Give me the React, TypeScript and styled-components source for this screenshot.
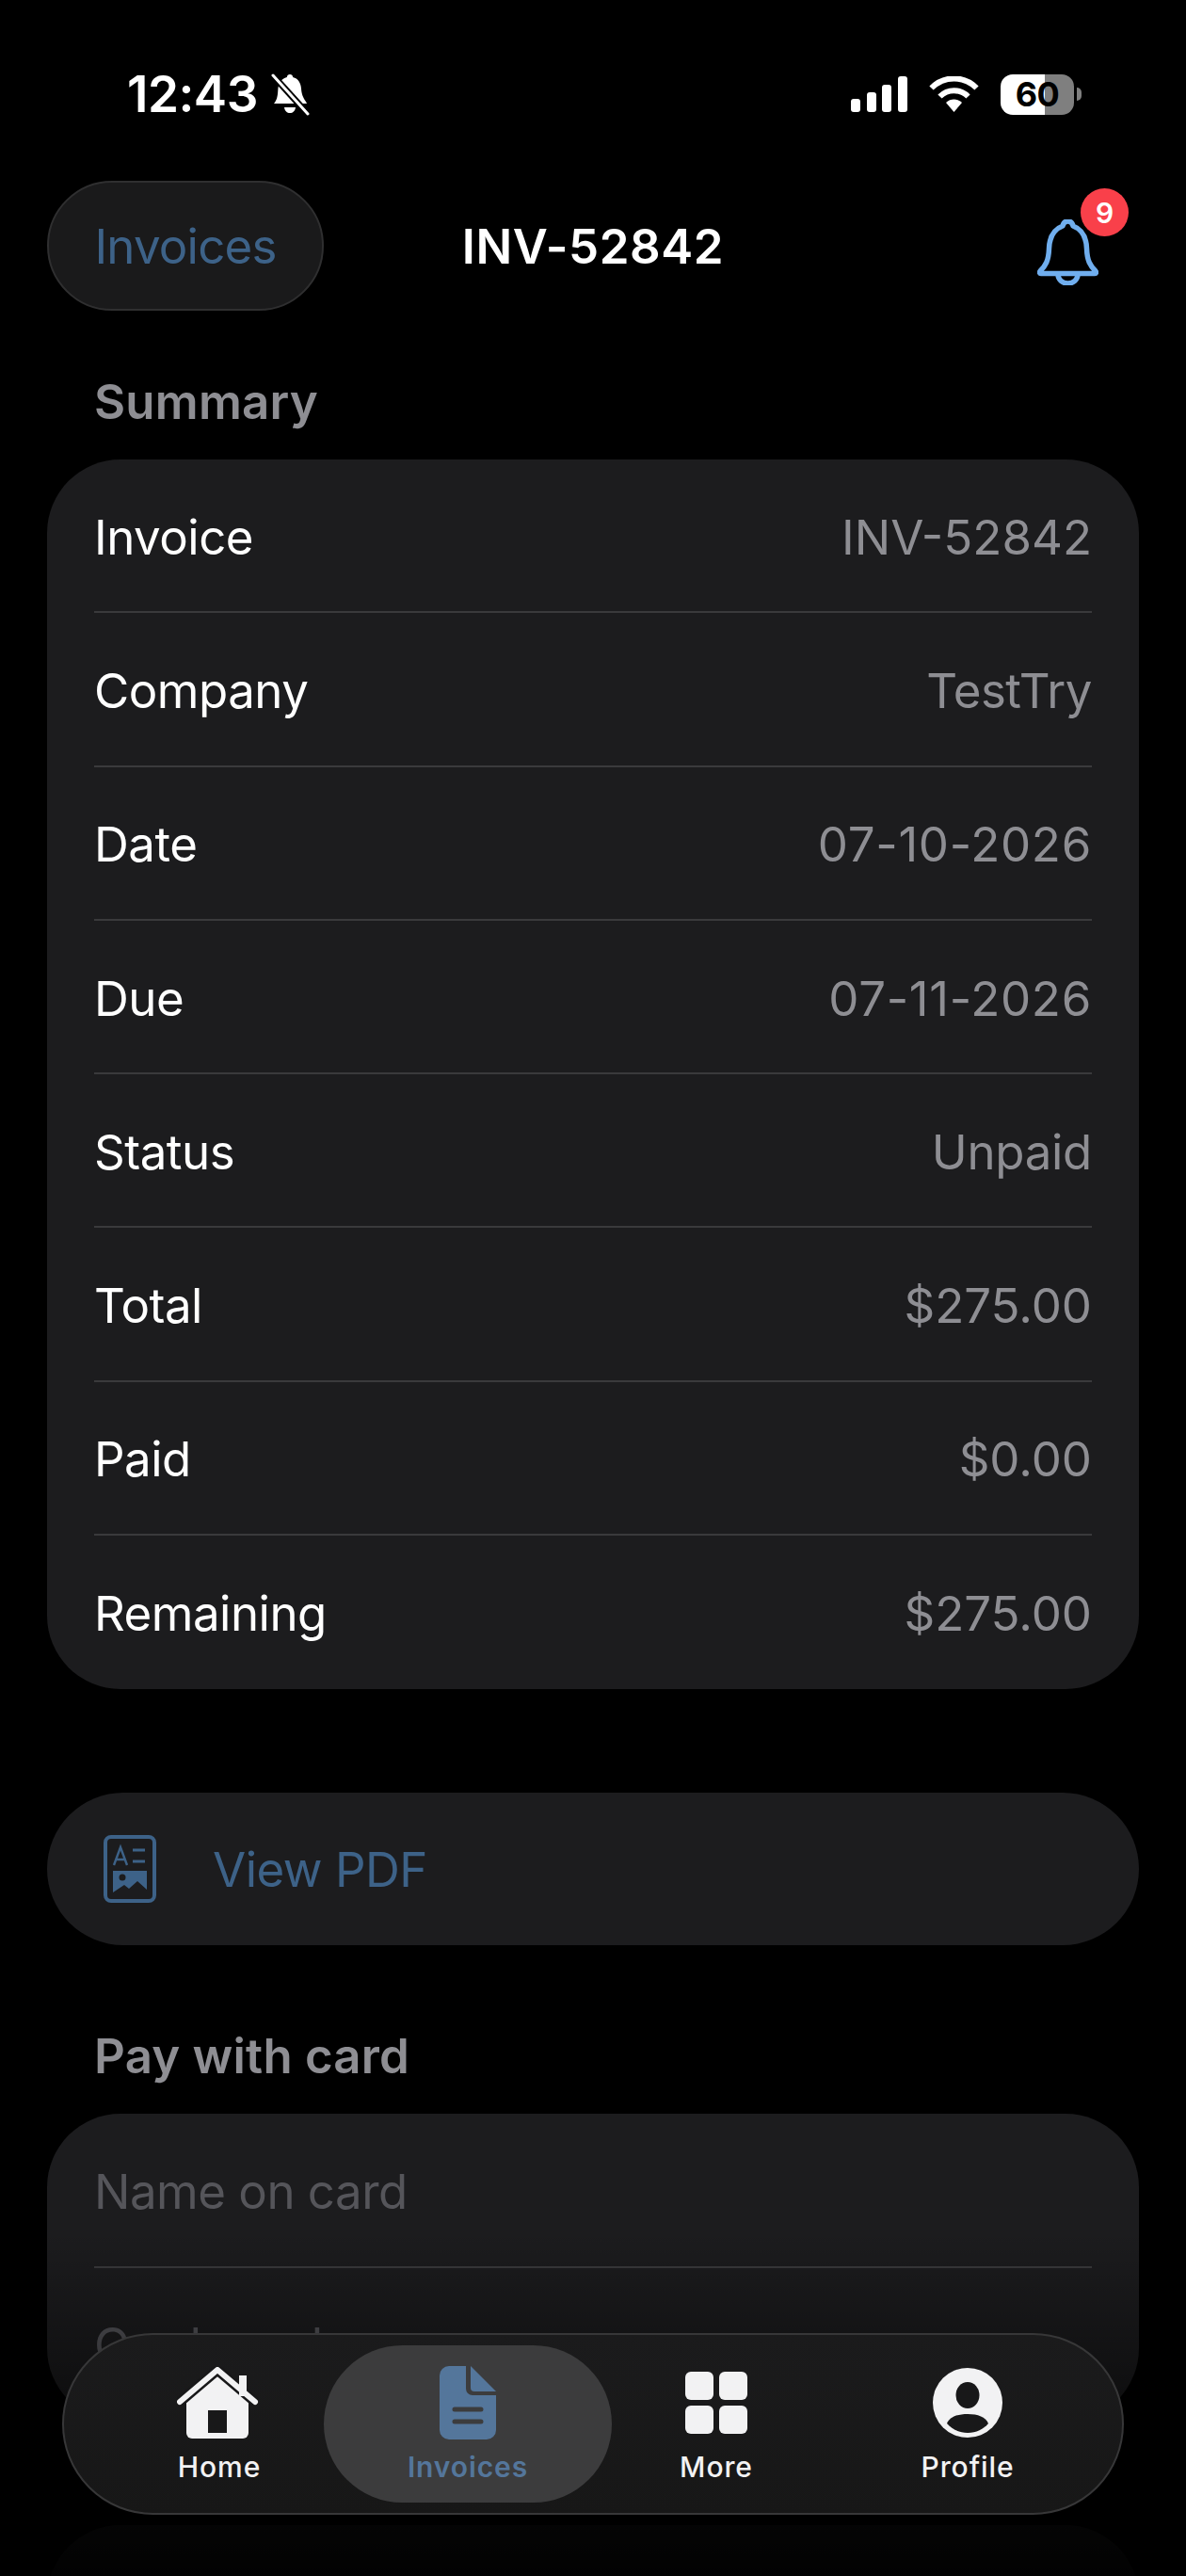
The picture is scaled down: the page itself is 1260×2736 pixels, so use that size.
import styled, { createGlobalStyle } from "styled-components";

const GlobalStyle = createGlobalStyle`
	html, body {
		margin: 0;
		padding: 0;
		background: #000;
	}
	* {
		box-sizing: border-box;
	}
`;

const Page = styled.div`
	position: relative;
	width: 1260px;
	height: 2736px;
	overflow: hidden;
	background: #000;
	color: #fff;
	font-family: Inter, "Liberation Sans", sans-serif;
`;

const StatusBar = styled.div`
	display: flex;
	align-items: center;
	justify-content: space-between;
	height: 192px;
	padding: 0 111px 0 135px;
`;

const StatusGroup = styled.div<{ $gap: number }>`
	display: flex;
	align-items: center;
	gap: ${(p) => p.$gap}px;
	margin-top: 8px;
`;

const Time = styled.span`
	font-size: 53px;
	font-weight: 600;
	letter-spacing: -0.5px;
`;

const Battery = styled.div`
	display: flex;
	align-items: center;
	justify-content: center;
	width: 78px;
	height: 43px;
	border-radius: 13px;
	background: linear-gradient(90deg, #fff 0 60%, #7f7f7f 60% 100%);
	color: #000;
	font-size: 36px;
	font-weight: 700;
	letter-spacing: -0.5px;
`;

const BatteryNub = styled.div`
	width: 5px;
	height: 14px;
	margin-left: -20px;
	border-radius: 0 7px 7px 0;
	background: #7f7f7f;
`;

const Header = styled.header`
	display: grid;
	grid-template-columns: 1fr auto 1fr;
	align-items: center;
	height: 138px;
	padding: 0 50px;
`;

const BackPill = styled.button`
	width: 294px;
	height: 138px;
	border: 2px solid #2f2f30;
	border-radius: 69px;
	background: #1a1a1b;
	color: #3d6288;
	font-family: inherit;
	font-size: 51px;
	font-weight: 400;
	letter-spacing: -0.8px;
`;

const Title = styled.h1`
	margin: 0;
	font-size: 51px;
	font-weight: 600;
	letter-spacing: 0.6px;
	color: #fff;
`;

const BellWrap = styled.div`
	position: relative;
	justify-self: end;
	width: 65px;
	height: 70px;
	margin-right: 43px;
	margin-top: 14px;
`;

const Badge = styled.span`
	position: absolute;
	top: -33px;
	right: -32px;
	display: flex;
	align-items: center;
	justify-content: center;
	width: 51px;
	height: 51px;
	border-radius: 50%;
	background: #f9404a;
	color: #fff;
	font-size: 30px;
	font-weight: 600;
`;

const Content = styled.main`
	padding: 0 50px;
`;

const SectionTitle = styled.h2<{ $top: number }>`
	margin: ${(p) => p.$top}px 0 30px;
	padding-left: 50px;
	height: 63px;
	font-size: 51px;
	line-height: 63px;
	font-weight: 600;
	letter-spacing: 0.2px;
	color: #8e8e93;
`;

const Card = styled.section`
	padding: 0 50px;
	border-radius: 78px;
	background: #1c1c1e;
`;

const Row = styled.div`
	display: flex;
	align-items: center;
	justify-content: space-between;
	height: 163.3px;
	padding-top: 3px;
	font-size: 51px;
	letter-spacing: -0.5px;
	border-bottom: 2px solid #3a3a3c;

	&:last-child {
		border-bottom: none;
		padding-bottom: 2px;
	}
`;

const RowValue = styled.span<{ $spacing: number }>`
	color: #8e8e93;
	letter-spacing: ${(p) => p.$spacing}px;
`;

const Placeholder = styled.span`
	color: #55555a;
`;

const PdfButton = styled.button`
	display: flex;
	align-items: center;
	gap: 60px;
	width: 100%;
	height: 162px;
	margin-top: 110px;
	padding: 0 0 0 60px;
	border: none;
	border-radius: 81px;
	background: #1c1c1e;
	color: #3d6288;
	font-family: inherit;
	font-size: 51px;
	letter-spacing: -0.5px;
`;

const EmptyCard = styled.div`
	height: 240px;
	margin-top: 110px;
	border-radius: 78px;
	background: #1c1c1e;
`;

const Fade = styled.div`
	position: absolute;
	left: 0;
	right: 0;
	bottom: 0;
	height: 366px;
	background: linear-gradient(180deg, rgba(0, 0, 0, 0) 0%, rgba(0, 0, 0, 0.85) 86%, rgba(0, 0, 0, 0.92) 100%);
	pointer-events: none;
`;

const TabBar = styled.nav`
	position: absolute;
	left: 66px;
	top: 2478px;
	display: grid;
	grid-template-columns: repeat(3, 264px) 270px;
	align-items: center;
	width: 1128px;
	height: 193px;
	padding: 0 0 0 33px;
	border: 2px solid #373738;
	border-radius: 97px;
	background: linear-gradient(180deg, #1b1b1c 0%, #171717 100%);
`;

const Tab = styled.div<{ $active?: boolean }>`
	display: flex;
	flex-direction: column;
	align-items: center;
	justify-content: space-between;
	height: 167px;
	padding: 22px 0 20px;
	margin: 0 ${(p) => (p.$active ? "-21px" : "0")};
	border-radius: 84px;
	background: ${(p) => (p.$active ? "#3c3c3d" : "transparent")};
	color: ${(p) => (p.$active ? "#54769b" : "#f2f2f3")};
`;

const TabIcon = styled.div`
	display: flex;
	align-items: center;
	justify-content: center;
	height: 78px;
`;

const TabLabel = styled.span<{ $active?: boolean }>`
	font-size: 30px;
	line-height: 36px;
	font-weight: ${(p) => (p.$active ? 600 : 500)};
	letter-spacing: 0.9px;
`;

const rows: [string, string, number][] = [
	["Invoice", "INV-52842", 0],
	["Company", "TestTry", -0.5],
	["Date", "07-10-2026", 0.7],
	["Due", "07-11-2026", 0.7],
	["Status", "Unpaid", -0.3],
	["Total", "$275.00", 0],
	["Paid", "$0.00", 0],
	["Remaining", "$275.00", 0],
];

function SilentBell() {
	return (
		<svg width='42' height='46' viewBox='0 0 42 46' fill='none'>
			<path
				d='M21 2c1.800 0 3 1.200 3.200 3 5.500 1.400 8.300 6 8.800 12 .4 5.500 1.500 9 5 14l1 2H4c3-3.500 4-7.500 4.300-14C8.600 11 12 6.500 17.800 5 18 3.200 19.200 2 21 2Z'
				fill='#fff'
			/>
			<path d='M15 37h12c-.6 4-3 6-6 6s-5.400-2-6-6Z' fill='#fff' />
			<path d='M1 1l40 44' stroke='#000' strokeWidth='7' />
			<path d='M3 3l37 41' stroke='#fff' strokeWidth='3' strokeLinecap='round' />
		</svg>
	);
}

function Signal() {
	return (
		<svg width='60' height='38' viewBox='0 0 60 38' fill='#fff'>
			<rect x='0' y='24' width='10' height='14' rx='3' />
			<rect x='17' y='17' width='10' height='21' rx='3' />
			<rect x='33' y='9' width='10' height='29' rx='3' />
			<rect x='50' y='0' width='10' height='38' rx='3' />
		</svg>
	);
}

function Wifi() {
	return (
		<svg width='53' height='38' viewBox='0 0 53 38' fill='none' stroke='#fff'>
			<path d='M2.500 12.500C16 -1 37 -1 50.500 12.500' strokeWidth='6' />
			<path d='M11.500 21.500C20 13 33 13 41.500 21.500' strokeWidth='6' />
			<path d='M18 28c5-4.600 12-4.600 17 0l-8.500 10Z' fill='#fff' stroke='none' />
		</svg>
	);
}

function BlueBell() {
	return (
		<svg width='65' height='70' viewBox='0 0 65 70' fill='none' stroke='#70aeee' strokeWidth='5.500' strokeLinejoin='round'>
			<path d='M3 55c6-6 9-11 9.500-24C13 17 19 10 27 7c.6-3 2.600-5 5.500-5s4.900 2 5.500 5c8 3 14 10 14.500 24C53 44 56 49 62 55c1 1.400.4 2.500-1 2.500H4c-1.400 0-2-1.100-1-2.500Z' />
			<path d='M22 58c0 6 4.500 10 10.500 10S43 64 43 58' />
		</svg>
	);
}

function PdfIcon() {
	return (
		<svg width='56' height='72' viewBox='0 0 56 72' fill='none' stroke='#3d6288' strokeWidth='3'>
			<rect x='2' y='2' width='52' height='68' rx='6' strokeWidth='4' />
			<path d='M11 32l7-19 7 19M13.500 26h9' strokeWidth='2.400' />
			<path d='M31 16h13M31 28h13' strokeWidth='3' />
			<path d='M10 38h36v20l-10-9-9 8-5-4-12 8Z' fill='#3d6288' stroke='none' />
			<circle cx='20' cy='45' r='3.500' fill='#1c1c1e' stroke='none' />
		</svg>
	);
}

function HomeIcon() {
	return (
		<svg width='90' height='76' viewBox='0 0 90 76' fill='none'>
			<path d='M10 32 43 6l33 26v38a6 6 0 0 1-6 6H16a6 6 0 0 1-6-6Z' fill='currentColor' />
			<path d='M3 37 43 3l40 34' stroke='#181819' strokeWidth='11' />
			<path d='M3 37 43 3l40 34' stroke='currentColor' strokeWidth='6' strokeLinecap='round' strokeLinejoin='round' />
			<rect x='66' y='9' width='8' height='22' fill='currentColor' />
			<rect x='33' y='46' width='20' height='24' fill='#181819' />
		</svg>
	);
}

function DocIcon() {
	return (
		<svg width='60' height='78' viewBox='0 0 60 78' fill='none'>
			<path d='M10 0h18v24a7 7 0 0 0 7 7h25v37a10 10 0 0 1-10 10H10A10 10 0 0 1 0 68V10A10 10 0 0 1 10 0Z' fill='currentColor' />
			<path d='M33 0l27 27H37a4 4 0 0 1-4-4Z' fill='currentColor' />
			<path d='M16 46h28M16 59h28' stroke='#3c3c3d' strokeWidth='5' strokeLinecap='round' />
		</svg>
	);
}

function GridIcon() {
	return (
		<svg width='66' height='66' viewBox='0 0 66 66' fill='currentColor'>
			<rect x='0' y='0' width='30' height='30' rx='6' />
			<rect x='36' y='0' width='30' height='30' rx='6' />
			<rect x='0' y='36' width='30' height='30' rx='6' />
			<rect x='36' y='36' width='30' height='30' rx='6' />
		</svg>
	);
}

function ProfileIcon() {
	return (
		<svg width='74' height='74' viewBox='0 0 74 74'>
			<circle cx='37' cy='37' r='37' fill='currentColor' />
			<ellipse cx='37' cy='29' rx='12.500' ry='14' fill='#181819' />
			<path d='M15 59c3-7 11-10 22-10s19 3 22 10c-5 6-13 10-22 10s-17-4-22-10Z' fill='#181819' />
		</svg>
	);
}

const tabs = [
	{ label: "Home", icon: <HomeIcon /> },
	{ label: "Invoices", icon: <DocIcon />, active: true },
	{ label: "More", icon: <GridIcon /> },
	{ label: "Profile", icon: <ProfileIcon /> },
];

export default function App() {
	return (
		<Page>
			<GlobalStyle />
			<StatusBar>
				<StatusGroup $gap={13}>
					<Time>12:43</Time>
					<SilentBell />
				</StatusGroup>
				<StatusGroup $gap={23}>
					<Signal />
					<Wifi />
					<Battery>60</Battery>
					<BatteryNub />
				</StatusGroup>
			</StatusBar>
			<Header>
				<BackPill>Invoices</BackPill>
				<Title>INV-52842</Title>
				<BellWrap>
					<BlueBell />
					<Badge>9</Badge>
				</BellWrap>
			</Header>
			<Content>
				<SectionTitle $top={65}>Summary</SectionTitle>
				<Card>
					{rows.map(([name, value, spacing]) => (
						<Row key={name}>
							<span>{name}</span>
							<RowValue $spacing={spacing}>{value}</RowValue>
						</Row>
					))}
				</Card>
				<PdfButton>
					<PdfIcon />
					View PDF
				</PdfButton>
				<SectionTitle $top={86}>Pay with card</SectionTitle>
				<Card>
					<Row>
						<Placeholder>Name on card</Placeholder>
					</Row>
					<Row>
						<Placeholder>Card number</Placeholder>
					</Row>
				</Card>
				<EmptyCard />
			</Content>
			<Fade />
			<TabBar>
				{tabs.map((tab) => (
					<Tab key={tab.label} $active={tab.active}>
						<TabIcon>{tab.icon}</TabIcon>
						<TabLabel $active={tab.active}>{tab.label}</TabLabel>
					</Tab>
				))}
			</TabBar>
		</Page>
	);
}
